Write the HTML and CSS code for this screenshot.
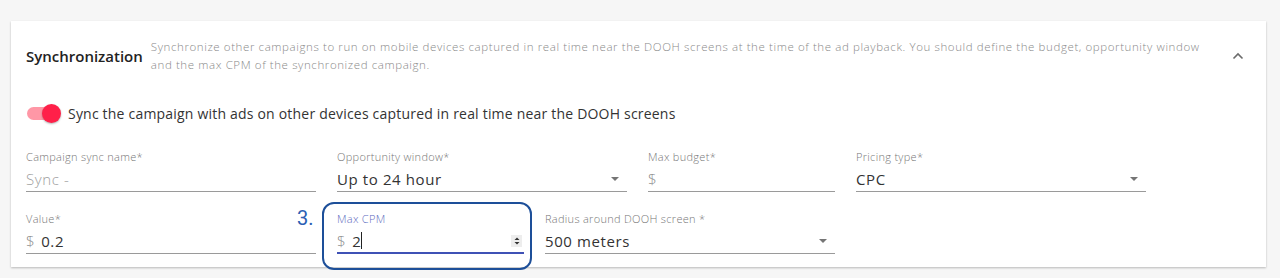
FILE: index.html
```html
<!DOCTYPE html>
<html lang="en">
<head>
    <meta charset="UTF-8">
    <meta name="viewport" content="width=device-width, initial-scale=1.0">
    <title>Synchronization</title>
    <link rel="stylesheet" href="styles.css">
</head>
<body>
    <!-- Synchronization panel -->
    <div class="card">
        <div class="card-header">
            <div class="title">Synchronization</div>
            <div class="description">Synchronize other campaigns to run on mobile devices captured in real time near the DOOH screens at the time of the ad playback. You should define the budget, opportunity window and the max CPM of the synchronized campaign.</div>
            <div class="chevron">
                <svg width="12" height="8" viewBox="0 0 12 8"><path d="M1.5 6.5 L6 2 L10.5 6.5" fill="none" stroke="#6b6b6b" stroke-width="1.6"/></svg>
            </div>
        </div>

        <div class="toggle-row">
            <div class="toggle">
                <div class="toggle-track"></div>
                <div class="toggle-knob"></div>
            </div>
            <span class="toggle-label">Sync the campaign with ads on other devices captured in real time near the DOOH screens</span>
        </div>

        <div class="field-row">
            <div class="field w-lg">
                <label>Campaign sync name*</label>
                <div class="input"><span class="placeholder">Sync -</span></div>
            </div>
            <div class="field w-lg">
                <label>Opportunity window*</label>
                <div class="input select"><span class="value">Up to 24 hour</span><span class="arrow"></span></div>
            </div>
            <div class="field w-sm">
                <label>Max budget*</label>
                <div class="input"><span class="prefix">$</span></div>
            </div>
            <div class="field w-lg">
                <label>Pricing type*</label>
                <div class="input select"><span class="value">CPC</span><span class="arrow"></span></div>
            </div>
        </div>

        <div class="field-row">
            <div class="field w-lg">
                <label>Value*</label>
                <div class="input"><span class="prefix">$</span><span class="value">0.2</span></div>
            </div>
            <div class="field w-sm focused">
                <span class="step-number">3.</span>
                <div class="highlight"></div>
                <label>Max CPM</label>
                <div class="input"><span class="prefix">$</span><span class="value">2</span><span class="caret"></span>
                    <span class="spinner">
                        <svg width="10" height="10" viewBox="0 0 10 10"><path d="M5 1.5 L7.5 4 L2.5 4 Z M5 8.5 L7.5 6 L2.5 6 Z" fill="#333"/></svg>
                    </span>
                </div>
            </div>
            <div class="field w-lg">
                <label>Radius around DOOH screen *</label>
                <div class="input select"><span class="value">500 meters</span><span class="arrow"></span></div>
            </div>
        </div>
    </div>
</body>
</html>
```

FILE: styles.css
```css
body {
    margin: 0;
    padding: 21px 14px 10px 11px;
    background-color: #f6f6f6;
    font-family: "Open Sans", "Noto Sans", sans-serif;
    color: #333;
}

/* Card */
.card {
    background-color: #fff;
    box-shadow: 0 1px 2px rgba(0, 0, 0, 0.25);
    padding: 17px 15px 13px 15px;
}

.card-header {
    display: flex;
    align-items: center;
}

.title {
    font-size: 15px;
    font-weight: 600;
    color: #222;
    margin-right: 8px;
    white-space: nowrap;
}

.description {
    width: 1064px;
    font-size: 11.5px;
    line-height: 18px;
    letter-spacing: 0.6px;
    font-weight: 300;
    color: #8a8a8a;
}

.chevron {
    margin-left: auto;
    margin-right: 7px;
    display: flex;
}

/* Toggle */
.toggle-row {
    display: flex;
    align-items: center;
    height: 22px;
    margin-top: 28px;
}

.toggle {
    position: relative;
    width: 34px;
    height: 20px;
    margin-left: 1px;
    margin-right: 7px;
}

.toggle-track {
    position: absolute;
    left: 0;
    top: 4px;
    width: 32px;
    height: 13px;
    border-radius: 7px;
    background-color: #ff97a6;
}

.toggle-knob {
    position: absolute;
    right: 0;
    top: 1px;
    width: 19px;
    height: 19px;
    border-radius: 50%;
    background-color: #ff2049;
    box-shadow: 0 1px 2px rgba(0, 0, 0, 0.3);
}

.toggle-label {
    font-size: 14px;
    letter-spacing: 0.2px;
    color: #333;
}

/* Fields */
.field-row {
    display: flex;
    column-gap: 21px;
    margin-top: 26px;
}

.field-row + .field-row {
    margin-top: 20px;
}

.field {
    position: relative;
    display: flex;
    flex-direction: column;
}

.w-lg {
    width: 290px;
}

.w-sm {
    width: 187px;
}

label {
    font-size: 11px;
    line-height: 14px;
    letter-spacing: 0.3px;
    font-weight: 300;
    color: #777;
    margin-bottom: 3px;
}

.input {
    position: relative;
    display: flex;
    align-items: center;
    height: 24px;
    border-bottom: 1px solid #9a9a9a;
    font-size: 15px;
    letter-spacing: 0.6px;
}

.placeholder {
    color: #9e9e9e;
    font-weight: 300;
}

.prefix {
    color: #8a8a8a;
    font-weight: 300;
    margin-right: 6px;
}

.value {
    color: #333;
}

.arrow {
    margin-left: auto;
    margin-right: 8px;
    width: 0;
    height: 0;
    border-left: 4px solid transparent;
    border-right: 4px solid transparent;
    border-top: 4px solid #757575;
}

/* Focused field */
.focused label {
    color: #5c6bc0;
}

.focused .input {
    border-bottom: 2px solid #3f51b5;
    height: 23px;
}

.caret {
    width: 1px;
    height: 17px;
    background-color: #222;
}

.spinner {
    margin-left: auto;
    margin-right: 2px;
    width: 11px;
    height: 12px;
    background-color: #ededed;
    display: flex;
    align-items: center;
    justify-content: center;
}

/* Annotation */
.highlight {
    position: absolute;
    left: -15px;
    top: -10px;
    width: 206px;
    height: 64px;
    border: 2.5px solid #1d4f99;
    border-radius: 12px;
}

.step-number {
    position: absolute;
    left: -40px;
    top: -6px;
    font-family: Roboto, sans-serif;
    font-size: 20px;
    color: #2b5fb4;
}
```
